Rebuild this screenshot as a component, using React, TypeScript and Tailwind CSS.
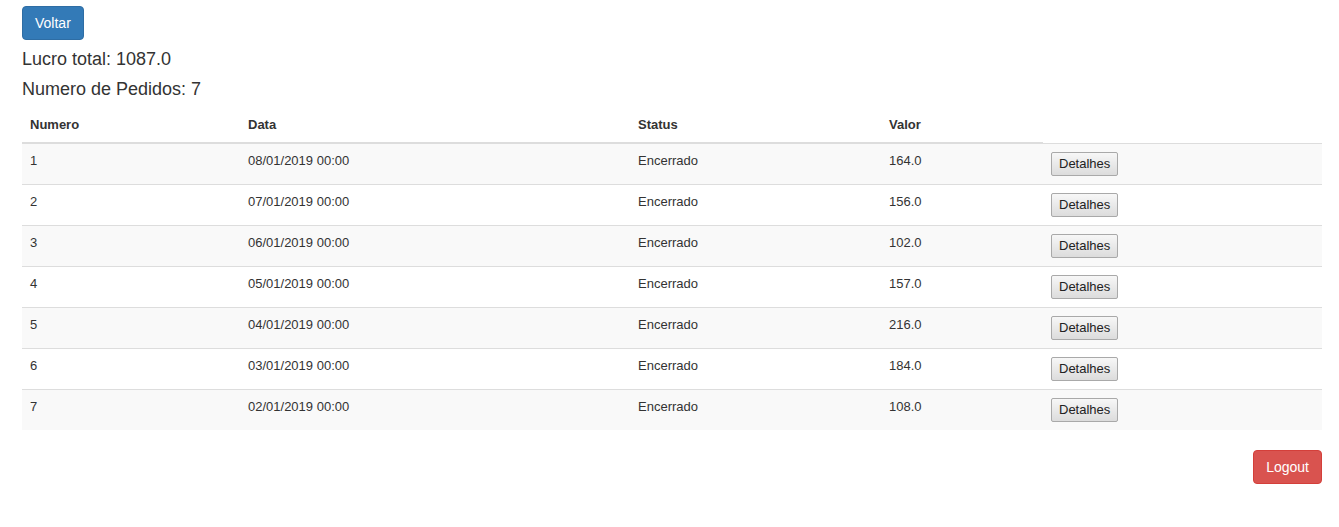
import React from "react";

const rows = [
  { n: "1", d: "08/01/2019 00:00", s: "Encerrado", v: "164.0" },
  { n: "2", d: "07/01/2019 00:00", s: "Encerrado", v: "156.0" },
  { n: "3", d: "06/01/2019 00:00", s: "Encerrado", v: "102.0" },
  { n: "4", d: "05/01/2019 00:00", s: "Encerrado", v: "157.0" },
  { n: "5", d: "04/01/2019 00:00", s: "Encerrado", v: "216.0" },
  { n: "6", d: "03/01/2019 00:00", s: "Encerrado", v: "184.0" },
  { n: "7", d: "02/01/2019 00:00", s: "Encerrado", v: "108.0" },
];

export default function App() {
  return (
    <div
      className="min-h-[527px] bg-white pl-[22px] pr-[17px] text-[#333] text-[13px] leading-[18.57px]"
      style={{ fontFamily: '"Liberation Sans", Arial, Helvetica, sans-serif' }}
    >
      <div className="pt-[6px]">
        <button className="h-[34px] px-[12px] rounded-[4px] border border-[#2e6da4] bg-[#337ab7] text-white text-[14px] leading-[20px]">
          Voltar
        </button>
      </div>
      <h4 className="mt-[10px] text-[18px] leading-[19.8px] font-normal">Lucro total: 1087.0</h4>
      <h4 className="mt-[10px] text-[18px] leading-[19.8px] font-normal">Numero de Pedidos: 7</h4>
      <table className="mt-[8px] w-[1300px] table-fixed border-collapse">
        <colgroup>
          <col className="w-[218px]" />
          <col className="w-[390px]" />
          <col className="w-[251px]" />
          <col className="w-[162px]" />
          <col className="w-[279px]" />
        </colgroup>
        <thead>
          <tr>
            <th className="p-[8px] text-left font-bold align-bottom border-b-2 border-[#ddd]">Numero</th>
            <th className="p-[8px] text-left font-bold align-bottom border-b-2 border-[#ddd]">Data</th>
            <th className="p-[8px] text-left font-bold align-bottom border-b-2 border-[#ddd]">Status</th>
            <th className="p-[8px] text-left font-bold align-bottom border-b-2 border-[#ddd]">Valor</th>
          </tr>
        </thead>
        <tbody>
          {rows.map((r, i) => (
            <tr key={r.n} className={i % 2 === 0 ? "bg-[#f9f9f9]" : "bg-white"}>
              <td className="p-[8px] align-top border-t border-[#ddd]">{r.n}</td>
              <td className="p-[8px] align-top border-t border-[#ddd]">{r.d}</td>
              <td className="p-[8px] align-top border-t border-[#ddd]">{r.s}</td>
              <td className="p-[8px] align-top border-t border-[#ddd]">{r.v}</td>
              <td className="p-[8px] align-top border-t border-[#ddd]">
                <button className="block h-[24px] px-[7px] rounded-[2px] border border-[#a9a9a9] bg-gradient-to-b from-[#f7f7f7] to-[#dcdcdc] text-[13px] leading-[22px] text-[#222]">
                  Detalhes
                </button>
              </td>
            </tr>
          ))}
        </tbody>
      </table>
      <div className="mt-[20px] flex justify-end">
        <button className="h-[34px] px-[12px] rounded-[4px] border border-[#d43f3a] bg-[#d9534f] text-white text-[14px] leading-[20px]">
          Logout
        </button>
      </div>
    </div>
  );
}
